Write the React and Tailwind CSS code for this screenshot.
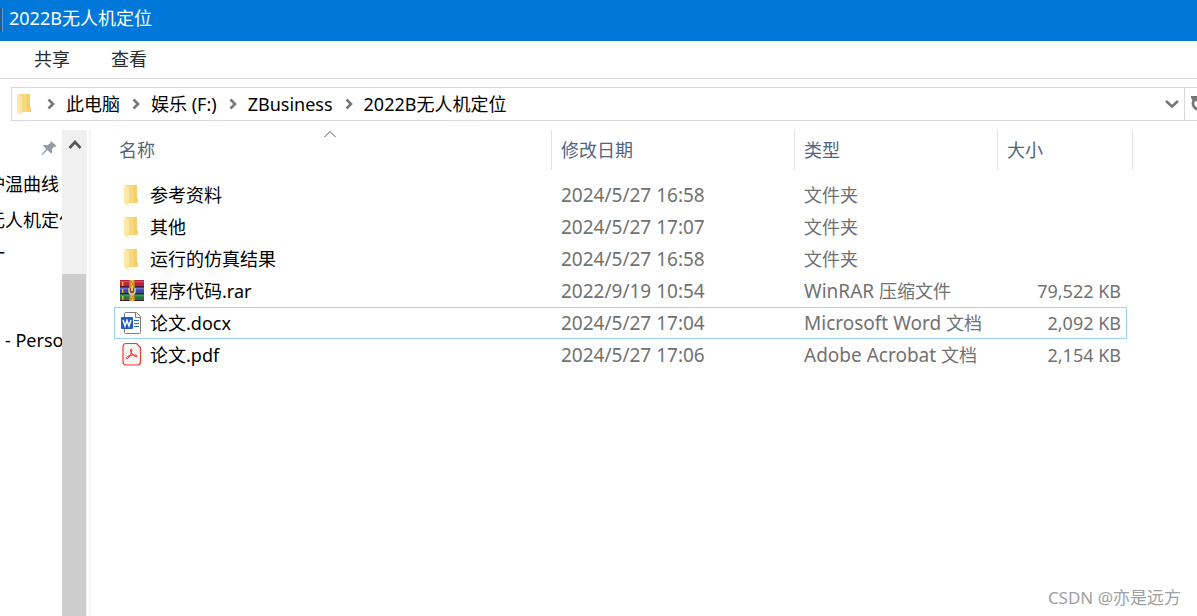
import React from "react";

function FolderIcon() {
  return (
    <svg width="26" height="26" viewBox="0 0 26 26" aria-hidden="true">
      <path d="M7 3h11v13l1 1v4H8z" fill="#f8d97d" />
      <path d="M14 3h4v13l1 1v4h-4z" fill="#f5d06a" />
      <path d="M5 3l5 3v16l-1 2-4-3z" fill="#ffe8a6" />
    </svg>
  );
}

function RarIcon() {
  return (
    <svg width="26" height="26" viewBox="0 0 26 26" aria-hidden="true">
      <path d="M1 2h24v7H1z" fill="#b91f3f" />
      <path d="M1 3h24v1.5H1z" fill="#d9415c" />
      <path d="M1 9h24v7H1z" fill="#3c479c" />
      <path d="M1 10h24v1.5H1z" fill="#6773cf" />
      <path d="M1 16h24v7H1z" fill="#27733b" />
      <path d="M1 17h24v1.5H1z" fill="#3e9a50" />
      <path d="M1 8h24v1H1zM1 15h24v1H1zM1 22h24v1H1z" fill="#3b1830" />
      <path d="M3 4h1.400v4H3zM3 11h1.400v4H3zM3 18h1.400v4H3z" fill="#f0b93a" />
      <path d="M10 2h6v21h-6z" fill="#b87a20" />
      <path d="M11.500 2h3v21h-3z" fill="#efb64a" />
      <path d="M12 4h1M13 6h1M12 8h1M13 19h1M12 21h1" stroke="#8a5a17" strokeWidth="1" />
      <path d="M9 10h8v5l-2 2h-4l-2-2z" fill="#6a5540" />
      <path d="M10 10v4l1.500 2h3l1.500-2v-4" fill="none" stroke="#e9dcc0" strokeWidth="1.300" />
      <path d="M12 8h2v5h-2z" fill="#f5c04f" />
    </svg>
  );
}

function WordIcon() {
  return (
    <svg width="26" height="26" viewBox="0 0 26 26" aria-hidden="true">
      <path d="M5.500 3.500q0-1 1-1h11l4 4v16q0 1-1 1h-14q-1 0-1-1z" fill="#fff" stroke="#7d7d7d" />
      <path d="M16.500 2.500v5h5" fill="none" stroke="#7d7d7d" />
      <path d="M15 10.500h5M15 13.500h5M15 16.500h5" stroke="#2b6cc4" />
      <rect x="2" y="7" width="12" height="12" rx="1" fill="#1d5cbe" />
      <path d="M4 10l2 6 2-5.500 2 5.500 2-6" fill="none" stroke="#fff" strokeWidth="1.500" />
    </svg>
  );
}

function PdfIcon() {
  return (
    <svg width="26" height="26" viewBox="0 0 26 26" aria-hidden="true">
      <path
        d="M7 1.500h10.500l4 4V20a3 3 0 0 1-3 3H7a3 3 0 0 1-3-3V4.500a3 3 0 0 1 3-3z"
        fill="#f6f3f3"
        stroke="#f03a32"
        strokeWidth="1.200"
      />
      <path
        d="M12.400 7c-1.400 0-.8 2.800.7 4.800 1.700 2.200 4.600 3.600 5 2.300.4-1.400-4.300-1.300-6.600-.7-2.500.7-4.600 2.100-4 3 .9 1.100 3-1.400 4-3.700 1-2.400 1.800-5.700.9-5.700z"
        fill="none"
        stroke="#f0281f"
        strokeWidth="1"
      />
    </svg>
  );
}

function Chevron({ className }) {
  return (
    <svg width="10" height="12" viewBox="0 0 10 12" className={className} aria-hidden="true">
      <path d="M2.500 1.500L7 6l-4.500 4.500" fill="none" stroke="#777" strokeWidth="2.600" />
    </svg>
  );
}

const files = [
  { name: "参考资料", date: "2024/5/27 16:58", app: "", kind: "文件夹", size: "", Icon: FolderIcon },
  { name: "其他", date: "2024/5/27 17:07", app: "", kind: "文件夹", size: "", Icon: FolderIcon },
  { name: "运行的仿真结果", date: "2024/5/27 16:58", app: "", kind: "文件夹", size: "", Icon: FolderIcon },
  { name: "程序代码.rar", date: "2022/9/19 10:54", app: "WinRAR ", kind: "压缩文件", size: "79,522 KB", Icon: RarIcon },
  { name: "论文.docx", date: "2024/5/27 17:04", app: "Microsoft Word ", kind: "文档", size: "2,092 KB", Icon: WordIcon, focused: true },
  { name: "论文.pdf", date: "2024/5/27 17:06", app: "Adobe Acrobat ", kind: "文档", size: "2,154 KB", Icon: PdfIcon },
];

const crumbs = ["此电脑", "娱乐 (F:)", "ZBusiness", "2022B无人机定位"];

function HeaderCell({ label, sorted, colSpan, first }) {
  return (
    <th scope="col" colSpan={colSpan} className="relative h-10 border-r border-[#e2e2e2] p-0 text-left font-normal">
      {sorted && (
        <span className="absolute inset-x-0 top-0 flex justify-center pr-1.5">
          <svg width="14" height="8" viewBox="0 0 14 8" aria-hidden="true">
            <path d="M1.500 7L7 1.500 12.500 7" fill="none" stroke="#555" />
          </svg>
        </span>
      )}
      <button type="button" className={first ? "w-full pl-[5px] text-left text-[#50657f]" : "w-full pl-[9px] text-left text-[#50657f]"}>
        {label}
      </button>
    </th>
  );
}

export default function App() {
  return (
    <div className="flex h-screen flex-col overflow-hidden bg-white font-['Noto_Sans','Noto_Sans_CJK_SC',sans-serif] text-[18px] leading-6 text-black">
      <header className="flex h-[41px] shrink-0 items-start bg-[#0078d9] pt-1.5 text-white">
        <span className="mt-0.5 h-6 w-[3px] border-r border-[#5e9fd8] bg-[#1c5f9d]" />
        <h1 className="pl-1.5">2022B无人机定位</h1>
      </header>

      <nav className="flex h-[38px] shrink-0 items-center gap-[41px] border-b border-[#dadada] pb-0.5 pl-[34px] text-[#2b2b2b]">
        <button type="button">共享</button>
        <button type="button">查看</button>
      </nav>

      <div className="mt-2 ml-[11px] flex h-[34px] shrink-0 border-y border-l border-[#d9d9d9]">
        <nav aria-label="路径" className="flex flex-1 items-center">
          <FolderIcon />
          <ol className="flex items-center pl-2">
            {crumbs.map((c) => (
              <li key={c} className="flex items-center">
                <Chevron className="mr-2.5 shrink-0" />
                <a href="#" className="pr-[11px] whitespace-nowrap">{c}</a>
              </li>
            ))}
          </ol>
        </nav>
        <button type="button" aria-label="展开" className="flex w-6 items-center justify-center">
          <svg width="14" height="10" viewBox="0 0 14 10" aria-hidden="true">
            <path d="M1 2l6 5.500L13 2" fill="none" stroke="#777" strokeWidth="2.600" />
          </svg>
        </button>
        <button type="button" aria-label="刷新" className="flex w-[13px] items-center overflow-hidden border-l border-[#d9d9d9] pl-[5px]">
          <svg width="18" height="18" viewBox="0 0 18 18" className="shrink-0" aria-hidden="true">
            <path d="M4 5A6 6 0 1 0 14 5" fill="none" stroke="#777" strokeWidth="2.800" />
            <path d="M1 1h8v8L6.500 6 4 7 1 3z" fill="#777" />
          </svg>
        </button>
      </div>

      <div className="mt-[9px] flex min-h-0 flex-1">
        <aside className="w-[62px] shrink-0 overflow-hidden whitespace-nowrap">
          <div className="flex h-9 items-center justify-end pr-1">
            <svg width="18" height="18" viewBox="0 0 18 18" aria-hidden="true">
              <path d="M11 2l5.500 5-1.500 1-1-.3-2.300 2.500.6 3.100-1.300 1.200-3.500-3.400L2.500 16l-1-.5 4.700-5.500L3 6.800l1.300-1 3.200.5L10.600 4l-.3-1z" fill="#929ba4" />
            </svg>
          </div>
          <ul>
            <li className="-ml-[13px] flex h-9 items-center">炉温曲线</li>
            <li className="-ml-[13px] flex h-9 items-center">无人机定位</li>
            <li className="-ml-[13px] flex h-9 items-center pb-1.5">一</li>
          </ul>
          <div className="mt-12 flex h-9 items-center pl-[5px]">- Personal</div>
        </aside>
        <div className="flex w-[25px] shrink-0 flex-col bg-[#f0f0f0]">
          <button type="button" aria-label="向上滚动" className="flex h-9 items-center justify-center pb-1.5">
            <svg width="14" height="10" viewBox="0 0 14 10" aria-hidden="true">
              <path d="M1.500 8L7 2l5.500 6" fill="none" stroke="#555" strokeWidth="2.600" />
            </svg>
          </button>
          <div className="mt-[108px] w-6 flex-1 bg-[#cdcdcd]" />
        </div>
        <div className="ml-0.5 w-0.5 shrink-0 bg-[#f5f5f5]" />

        <main className="flex min-w-0 flex-1 flex-col justify-between pl-[23px]">
          <table className="w-[1019px] table-fixed border-separate border-spacing-0 whitespace-nowrap">
            <colgroup>
              <col className="w-[438px]" />
              <col className="w-[243px]" />
              <col className="w-[203px]" />
              <col className="w-[129px]" />
              <col className="w-[6px]" />
            </colgroup>
            <thead>
              <tr>
                <HeaderCell label="名称" sorted first />
                <HeaderCell label="修改日期" />
                <HeaderCell label="类型" />
                <HeaderCell label="大小" colSpan={2} />
              </tr>
            </thead>
            <tbody className="before:block before:h-[9px] before:content-['']">
              {files.map(({ name, date, app, kind, size, Icon, focused }) => {
                const edge = focused ? "h-8 border-y border-[#99d1ff] p-0" : "h-8 border-y border-transparent p-0";
                return (
                  <tr key={name} className="text-[#717171]">
                    <td className={edge + " border-l"}>
                      <div className="flex items-center gap-[5px] pl-1 text-black">
                        <Icon />
                        <span>{name}</span>
                      </div>
                    </td>
                    <td className={edge + " pl-[9px]"}><span className="text-[19px]">{date}</span></td>
                    <td className={edge + " pl-[9px]"}><span className="text-[19px]">{app}</span>{kind}</td>
                    <td className={edge + " border-r pr-[5px] text-right"}>{size}</td>
                  </tr>
                );
              })}
            </tbody>
          </table>
          <footer className="pr-4 pb-1.5 text-right text-[17px] text-[#a0a0a0]">CSDN @亦是远方</footer>
        </main>
      </div>
    </div>
  );
}
